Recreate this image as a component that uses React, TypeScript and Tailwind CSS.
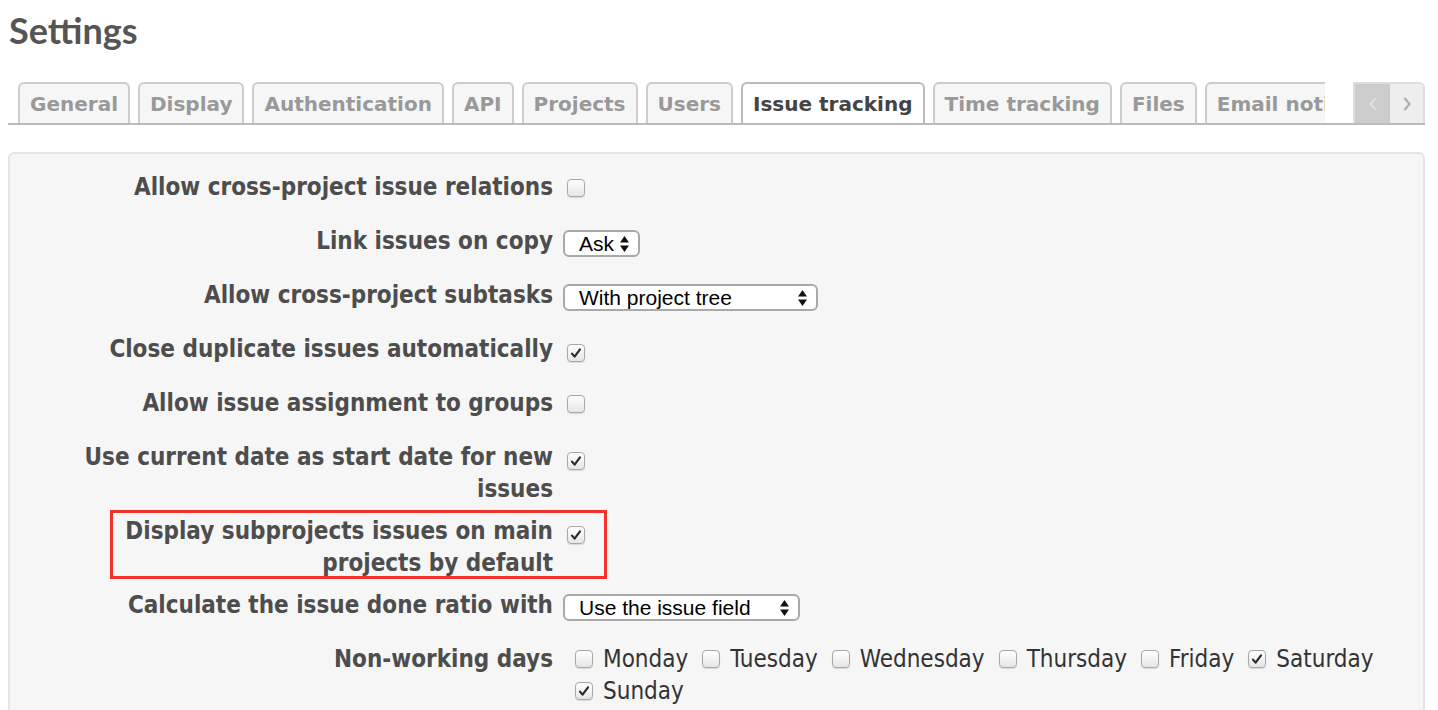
import React from 'react';

const labelFont = { fontFamily: '"DejaVu Sans Condensed", "DejaVu Sans", sans-serif' };

const Checkbox = ({ checked }: { checked?: boolean }) => (
  <span className="inline-flex w-[18px] h-[18px] shrink-0 items-center justify-center rounded-[4px] border border-[#a8a8a8] bg-gradient-to-b from-[#ffffff] to-[#e6e6e6] shadow-[0_1px_1px_rgba(0,0,0,0.12)]">
    {checked && (
      <svg width="12" height="12" viewBox="0 0 12 12">
        <path d="M2 6.6 L4.6 9.6 L10 2.4" fill="none" stroke="#2b2b2b" strokeWidth="2.2" strokeLinecap="round" strokeLinejoin="round" />
      </svg>
    )}
  </span>
);

const Select = ({ value, width }: { value: string; width: string }) => (
  <span
    className={`inline-flex h-[27px] items-center justify-between rounded-[6px] border-2 border-[#a9a9a9] bg-white pl-[14px] pr-[8px] text-[21px] text-black ${width}`}
    style={{ fontFamily: '"Liberation Sans", Arial, sans-serif' }}
  >
    <span>{value}</span>
    <svg width="11" height="18" viewBox="0 0 11 18">
      <path d="M5.5 1 L10 7.5 H1 Z" fill="#111" />
      <path d="M5.5 17 L10 10.5 H1 Z" fill="#111" />
    </svg>
  </span>
);

const Row = ({
  label,
  children,
  highlight,
}: {
  label: string;
  children: React.ReactNode;
  highlight?: boolean;
}) => (
  <div className="relative flex min-h-[54px] py-[5px]">
    <div className="w-[543px] shrink-0 flex justify-end">
      <label className="max-w-[475px] text-right text-[24px] leading-[32px] font-bold text-[#4d4d4d]" style={labelFont}>
        {label}
      </label>
    </div>
    <div className="flex min-h-[32px] items-start pl-[10px] pt-[5px]">{children}</div>
    {highlight && (
      <div className="pointer-events-none absolute left-[100px] top-[0px] h-[69px] w-[497px] border-[3px] border-[#f5322a]" />
    )}
  </div>
);

const tabs = [
  'General',
  'Display',
  'Authentication',
  'API',
  'Projects',
  'Users',
  'Issue tracking',
  'Time tracking',
  'Files',
  'Email notifications',
];

const days: [string, boolean][] = [
  ['Monday', false],
  ['Tuesday', false],
  ['Wednesday', false],
  ['Thursday', false],
  ['Friday', false],
  ['Saturday', true],
  ['Sunday', true],
];

export default function App() {
  return (
    <div className="w-[1438px] h-[710px] overflow-hidden bg-white">
      <h2
        className="px-[9px] pt-[8px] text-[36px] leading-[44px] font-bold text-[#555555]"
        style={{ fontFamily: 'Lato, "Open Sans", sans-serif' }}
      >
        Settings
      </h2>

      <div className="ml-[8px] mt-[30px] flex w-[1417px] items-end border-b-2 border-[#bbbbbb]">
        <div className="flex w-[1319px] overflow-hidden whitespace-nowrap pl-[10px]" style={{ fontFamily: '"DejaVu Sans", Verdana, sans-serif' }}>
          {tabs.map((t) => {
            const active = t === 'Issue tracking';
            return (
              <div
                key={t}
                className={`-mb-[2px] mr-[8px] flex h-[43px] shrink-0 items-center rounded-t-[6px] border-2 px-[10px] text-[20px] font-bold ${
                  active
                    ? 'border-[#bbbbbb] border-b-white bg-white text-[#444444]'
                    : 'border-[#cccccc] border-b-[#bbbbbb] bg-[#f6f6f6] text-[#999999]'
                }`}
              >
                {t}
              </div>
            );
          })}
        </div>
        <div className="ml-[28px] flex h-[41px] overflow-hidden rounded-tr-[6px] border-2 border-b-0 border-[#dddddd]">
          <div className="flex w-[35px] items-center justify-center bg-[#cccccc]">
            <svg width="10" height="16" viewBox="0 0 10 16"><path d="M7.5 2 L2.5 8 L7.5 14" fill="none" stroke="#e2e2e2" strokeWidth="2" /></svg>
          </div>
          <div className="flex w-[33px] items-center justify-center bg-[#eeeeee]">
            <svg width="10" height="16" viewBox="0 0 10 16"><path d="M2.5 2 L7.5 8 L2.5 14" fill="none" stroke="#aaaaaa" strokeWidth="2" /></svg>
          </div>
        </div>
      </div>

      <div className="ml-[8px] mt-[27px] w-[1417px] rounded-[6px] border-2 border-[#e5e5e5] bg-[#f6f6f6] pt-[12px] pb-[20px]">
        <Row label="Allow cross-project issue relations">
          <span className="ml-[4px] mt-[3px]"><Checkbox /></span>
        </Row>
        <Row label="Link issues on copy">
          <Select value="Ask" width="w-[77px]" />
        </Row>
        <Row label="Allow cross-project subtasks">
          <Select value="With project tree" width="w-[255px]" />
        </Row>
        <Row label="Close duplicate issues automatically">
          <span className="ml-[4px] mt-[3px]"><Checkbox checked /></span>
        </Row>
        <Row label="Allow issue assignment to groups">
          <span className="ml-[4px] mt-[3px]"><Checkbox /></span>
        </Row>
        <Row label="Use current date as start date for new issues">
          <span className="ml-[4px] mt-[3px]"><Checkbox checked /></span>
        </Row>
        <Row label="Display subprojects issues on main projects by default" highlight>
          <span className="ml-[4px] mt-[3px]"><Checkbox checked /></span>
        </Row>
        <Row label="Calculate the issue done ratio with">
          <Select value="Use the issue field" width="w-[237px]" />
        </Row>
        <Row label="Non-working days">
          <div className="-mt-[5px] flex w-[840px] flex-wrap pl-[12px]" style={labelFont}>
            {days.map(([d, c]) => (
              <span key={d} className="mr-[14px] flex items-center text-[24px] leading-[32px] text-[#333333]">
                <Checkbox checked={c} />
                <span className="ml-[10px]">{d}</span>
              </span>
            ))}
          </div>
        </Row>
      </div>
    </div>
  );
}
